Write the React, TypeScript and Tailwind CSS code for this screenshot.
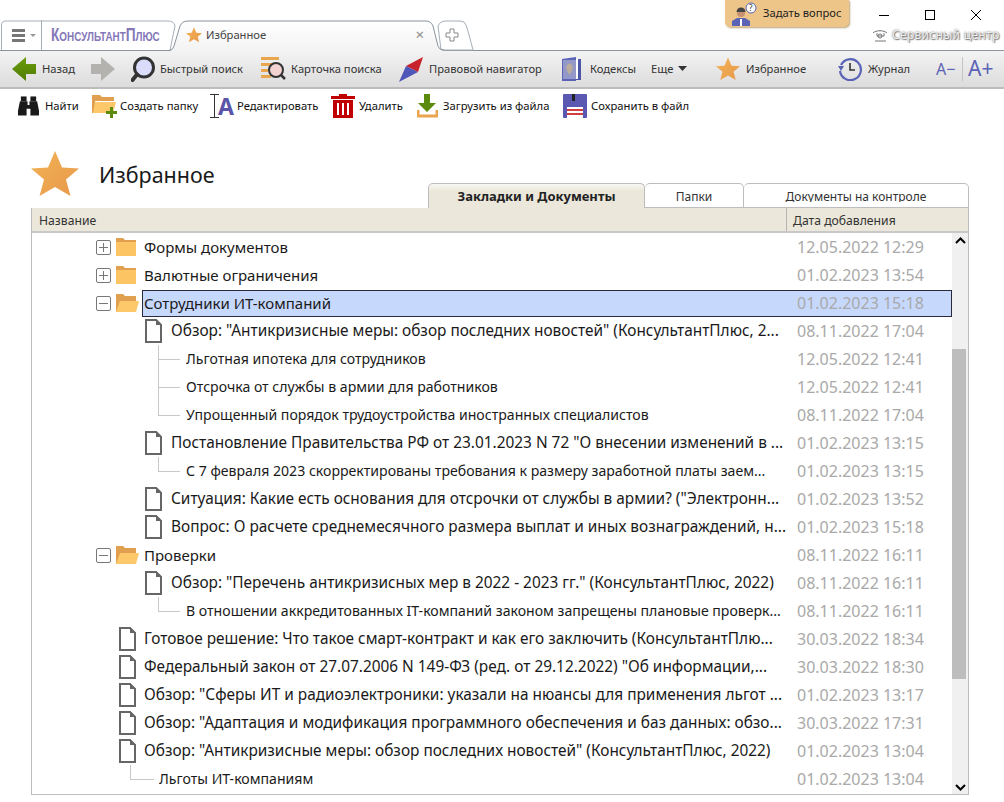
import React from 'react';

type Row = {
  kind: 'folder' | 'open' | 'doc' | 'sub';
  level: 0 | 1;
  text: string;
  date: string;
  last?: boolean;
  selected?: boolean;
};

const rows: Row[] = [
  { kind: 'folder', level: 0, text: 'Формы документов', date: '12.05.2022 12:29' },
  { kind: 'folder', level: 0, text: 'Валютные ограничения', date: '01.02.2023 13:54' },
  { kind: 'open', level: 0, text: 'Сотрудники ИТ-компаний', date: '01.02.2023 15:18', selected: true },
  { kind: 'doc', level: 1, text: 'Обзор: "Антикризисные меры: обзор последних новостей" (КонсультантПлюс, 2...', date: '08.11.2022 17:04' },
  { kind: 'sub', level: 1, text: 'Льготная ипотека для сотрудников', date: '12.05.2022 12:41' },
  { kind: 'sub', level: 1, text: 'Отсрочка от службы в армии для работников', date: '12.05.2022 12:41' },
  { kind: 'sub', level: 1, text: 'Упрощенный порядок трудоустройства иностранных специалистов', date: '08.11.2022 17:04', last: true },
  { kind: 'doc', level: 1, text: 'Постановление Правительства РФ от 23.01.2023 N 72 "О внесении изменений в ...', date: '01.02.2023 13:15' },
  { kind: 'sub', level: 1, text: 'С 7 февраля 2023 скорректированы требования к размеру заработной платы заем...', date: '01.02.2023 13:15', last: true },
  { kind: 'doc', level: 1, text: 'Ситуация: Какие есть основания для отсрочки от службы в армии? ("Электронн...', date: '01.02.2023 13:52' },
  { kind: 'doc', level: 1, text: 'Вопрос: О расчете среднемесячного размера выплат и иных вознаграждений, н...', date: '01.02.2023 15:18' },
  { kind: 'open', level: 0, text: 'Проверки', date: '08.11.2022 16:11' },
  { kind: 'doc', level: 1, text: 'Обзор: "Перечень антикризисных мер в 2022 - 2023 гг." (КонсультантПлюс, 2022)', date: '08.11.2022 16:11' },
  { kind: 'sub', level: 1, text: 'В отношении аккредитованных IT-компаний законом запрещены плановые проверк...', date: '08.11.2022 16:11', last: true },
  { kind: 'doc', level: 0, text: 'Готовое решение: Что такое смарт-контракт и как его заключить (КонсультантПлю...', date: '30.03.2022 18:34' },
  { kind: 'doc', level: 0, text: 'Федеральный закон от 27.07.2006 N 149-ФЗ (ред. от 29.12.2022) "Об информации,...', date: '30.03.2022 18:30' },
  { kind: 'doc', level: 0, text: 'Обзор: "Сферы ИТ и радиоэлектроники: указали на нюансы для применения льгот ...', date: '01.02.2023 13:17' },
  { kind: 'doc', level: 0, text: 'Обзор: "Адаптация и модификация программного обеспечения и баз данных: обзо...', date: '30.03.2022 17:31' },
  { kind: 'doc', level: 0, text: 'Обзор: "Антикризисные меры: обзор последних новостей" (КонсультантПлюс, 2022)', date: '01.02.2023 13:04' },
  { kind: 'sub', level: 0, text: 'Льготы ИТ-компаниям', date: '01.02.2023 13:04', last: true },
];

function Star({ size }: { size: number }) {
  return (
    <svg width={size} height={size} viewBox="0 0 48 48" className="shrink-0">
      <defs>
        <linearGradient id={`star${size}`} x1="0" y1="0" x2="1" y2="1">
          <stop offset="0" stopColor="#f2b355" />
          <stop offset="1" stopColor="#e8984a" />
        </linearGradient>
      </defs>
      <path d="M24 1 31 17.500 48 18.500 35 29.500 39.500 46 24 37 8.500 46 13 29.500 0 18.500 17 17.500Z" fill={`url(#star${size})`} />
    </svg>
  );
}

function FolderIcon({ open }: { open?: boolean }) {
  if (open) {
    return (
      <svg width="23" height="20" viewBox="0 0 23 20">
        <path d="M0 1h7l2 2h11v5H0Z" fill="#e0a050" />
        <path d="M0 6h20v2L1 19H0Z" fill="#e0a050" />
        <path d="M4 8h19l-3 11H0Z" fill="#fdc86a" />
      </svg>
    );
  }
  return (
    <svg width="20" height="20" viewBox="0 0 20 20">
      <path d="M0 1h7l2 2h11v3H0Z" fill="#e0a050" />
      <rect x="0" y="5" width="20" height="14" fill="#fdc463" />
    </svg>
  );
}

function DocIcon() {
  return (
    <svg width="17" height="24" viewBox="0 0 17 24" fill="none">
      <path d="M1 1H11L16 6V23H1Z" stroke="#666" strokeWidth="2" />
      <path d="M11 0 17 6H11Z" fill="#666" />
    </svg>
  );
}

function Toggle({ open }: { open?: boolean }) {
  return (
    <span className="w-[15px] h-[15px] rounded-[2px] border border-[#777] relative flex items-center justify-center shrink-0">
      <span className="w-[9px] h-px bg-[#777]" />
      {!open && <span className="w-px h-[9px] bg-[#777] absolute" />}
    </span>
  );
}

function TreeRow({ row }: { row: Row }) {
  let lead: React.ReactNode;
  if (row.kind === 'folder' || row.kind === 'open') {
    lead = (
      <div className="pl-[64px] w-[110px] shrink-0 flex items-center gap-[5px]">
        <Toggle open={row.kind === 'open'} />
        <FolderIcon open={row.kind === 'open'} />
      </div>
    );
  } else if (row.kind === 'doc') {
    lead = (
      <div className={`flex items-center shrink-0 ${row.level === 1 ? 'pl-[113px] w-[137px]' : 'pl-[87px] w-[110px]'}`}>
        <DocIcon />
      </div>
    );
  } else {
    lead = (
      <div className={`self-stretch shrink-0 ${row.level === 1 ? 'pl-[126px] w-[152px]' : 'pl-[98px] w-[125px]'}`}>
        <div className={`h-[15px] border-l border-b border-[#c8c8c8] ${row.level === 1 ? 'w-[22px]' : 'w-[24px]'}`} />
        {!row.last && <div className="h-[13px] border-l border-[#c8c8c8]" />}
      </div>
    );
  }
  let textCls = 'text-[15.400px]';
  if (row.kind === 'sub') textCls = 'text-[14.100px]';
  if (row.kind === 'folder' || row.kind === 'open') textCls = 'text-[15px]';
  return (
    <div className="h-[28px] flex items-center">
      {lead}
      <div
        className={`flex-1 min-w-0 flex items-center pl-[2px] ${
          row.selected ? 'h-[27px] bg-[#c7d8fd] outline outline-[#2a2a3a] -outline-offset-1' : 'h-full'
        }`}
      >
        <div className={`flex-1 min-w-0 whitespace-nowrap overflow-hidden text-[#1a1a1a] ${textCls}`}>{row.text}</div>
        <div className="w-[164px] pl-[9px] text-[16px] text-[#a9a9a9] whitespace-nowrap">{row.date}</div>
      </div>
    </div>
  );
}

function NavItem({ icon, label, cls }: { icon: React.ReactNode; label?: string; cls?: string }) {
  return (
    <div className={`flex items-center shrink-0 ${cls ?? ''}`}>
      {icon}
      {label && <span className="text-[11.200px] text-[#333] whitespace-nowrap">{label}</span>}
    </div>
  );
}

function ActionItem({ icon, label, cls }: { icon: React.ReactNode; label: string; cls?: string }) {
  return (
    <div className={`flex items-center shrink-0 ${cls ?? ''}`}>
      {icon}
      <span className="text-[11.250px] text-[#111] whitespace-nowrap">{label}</span>
    </div>
  );
}

export default function App() {
  return (
    <div className="w-[1004px] h-[802px] bg-white overflow-hidden relative font-['Noto_Sans','DejaVu_Sans',sans-serif]">
      {/* tab strip */}
      <div className="h-[50px] pt-[20px] relative z-10">
        <div className="absolute left-[725px] top-0 w-[124px] h-[27px] bg-[#eec588] rounded-b-[5px] shadow-[1px_1px_2px_#b9a27c] flex items-center pl-[7px] gap-[5px]">
          <svg width="26" height="26" viewBox="0 0 26 26">
            <circle cx="19" cy="7" r="5" fill="#fff" stroke="#5a63b5" />
            <text x="17" y="10" fontSize="8" fill="#333">?</text>
            <circle cx="9" cy="12" r="4" fill="#c89070" />
            <path d="M4.500 11a4.500 4.500 0 0 1 9 0Z" fill="#444" />
            <path d="M0 25v-5l5-3h8l5 3v5Z" fill="#5a63b5" />
            <rect x="8" y="18" width="2" height="7" fill="#fff" />
          </svg>
          <span className="text-[11.200px] text-[#222] whitespace-nowrap">Задать вопрос</span>
        </div>
        <div className="absolute right-[23px] top-[10px] flex items-center gap-[36px]">
          <span className="w-[10px] h-px bg-black" />
          <span className="w-[10px] h-[10px] border border-black" />
          <svg width="10" height="10" viewBox="0 0 10 10" stroke="#000"><path d="M0 0l10 10M10 0 0 10" /></svg>
        </div>
        <div className="absolute left-[872px] top-[26px] flex items-center gap-[4px] w-[132px]">
          <svg className="shrink-0" width="16" height="14" viewBox="0 0 16 14" fill="none" stroke="#777"><path d="M1 5c3-3 11-3 14 0M3 13h11M5 5v3h7V5" /><circle cx="8" cy="8" r="2" /></svg>
          <span className="text-[12px] tracking-[0.3px] text-[#eeeeee] whitespace-nowrap [text-shadow:0_0_2px_#555,1px_1px_1px_#888]">Сервисный центр</span>
        </div>
        <div className="relative w-[480px] h-[30px]">
          <svg className="absolute inset-0 overflow-visible" width="480" height="31" viewBox="0 0 480 31" fill="none">
            <defs>
              <linearGradient id="tabA" x1="0" y1="0" x2="0" y2="1">
                <stop offset="0" stopColor="#ffffff" />
                <stop offset="1" stopColor="#f3f3f3" />
              </linearGradient>
            </defs>
            <path d="M1.500 30V5Q1.500 1 6 1H168Q174 1 175 6L170 30" fill="#fff" stroke="#a5aeb8" />
            <path d="M441 30H473Q469 14 466 5Q465 1 460 1H446Q440 1 438 6Z" fill="#fff" stroke="#a5aeb8" />
            <path d="M170 31Q173 30 174 26L180 6Q182 1 188 1H426Q431 1 433 6L438 26Q439 30 444 31Z" fill="url(#tabA)" />
            <path d="M170 30Q173 30 174 26L180 6Q182 1 188 1H426Q431 1 433 6L438 26Q439 30 444 30" stroke="#8a939c" />
          </svg>
          <div className="absolute inset-0 flex items-center">
            <div className="flex items-center gap-[5px] w-[41px] pl-[12px] shrink-0">
              <svg width="13" height="13" viewBox="0 0 13 13" fill="#777"><rect y="0" width="13" height="3" /><rect y="5" width="13" height="3" /><rect y="10" width="13" height="3" /></svg>
              <svg width="6" height="3" viewBox="0 0 6 3" fill="#999"><path d="M0 0h6L3 3Z" /></svg>
            </div>
            <span className="w-px h-[30px] bg-[#a5aeb8] shrink-0" />
            <div className="ml-[9px] w-[135px] shrink-0">
              <span className="inline-block origin-left scale-x-[0.76] text-[18px] font-bold font-['Liberation_Sans',sans-serif] text-[#8478b8] whitespace-nowrap [font-variant-caps:small-caps]">КонсультантПлюс</span>
            </div>
            <div className="flex items-center w-[262px] shrink-0">
              <Star size={16} />
              <span className="ml-[4px] text-[11.200px] text-[#444]">Избранное</span>
              <span className="ml-auto mr-[24px] text-[#8a8a8a] text-[15px] leading-none">×</span>
            </div>
            <svg className="-ml-[3px]" width="14" height="14" viewBox="0 0 14 14" fill="none" stroke="#888"><path d="M5 1h4v4h4v4H9v4H5V9H1V5h4Z" /></svg>
          </div>
        </div>
      </div>

      {/* main toolbar */}
      <div className="h-[39px] border-t border-[#8a939c] border-b-2 border-b-[#bcbcbc] bg-gradient-to-b from-[#f3f3f3] to-[#dcdcdc] flex items-center pl-[12px]">
        <NavItem
          cls="w-[79px] gap-[6px]"
          label="Назад"
          icon={
            <svg width="24" height="24" viewBox="0 0 24 24">
              <defs>
                <linearGradient id="backArrow" x1="0" y1="0" x2="0" y2="1">
                  <stop offset="0" stopColor="#6b9c0e" />
                  <stop offset="1" stopColor="#4f7d03" />
                </linearGradient>
              </defs>
              <path d="M0 12 14 0V7H24V17H14V24Z" fill="url(#backArrow)" />
            </svg>
          }
        />
        <NavItem
          cls="w-[40px]"
          icon={
            <svg width="24" height="24" viewBox="0 0 24 24">
              <path d="M24 12 10 0V7H0V17H10V24Z" fill="#b3b2ae" />
            </svg>
          }
        />
        <NavItem
          cls="w-[130px] gap-[4px]"
          label="Быстрый поиск"
          icon={
            <svg width="25" height="26" viewBox="0 0 25 26">
              <circle cx="13" cy="11.500" r="9.500" fill="#d9dcfb" stroke="#333" strokeWidth="3" />
              <path d="M6 18.500 1.500 24" stroke="#333" strokeWidth="4" strokeLinecap="round" />
            </svg>
          }
        />
        <NavItem
          cls="w-[138px] gap-[5px]"
          label="Карточка поиска"
          icon={
            <svg width="25" height="24" viewBox="0 0 25 24">
              <path d="M0 1.500H18M0 7.500H18M0 13.500H7M0 19.500H10" stroke="#eaa64e" strokeWidth="3" />
              <circle cx="15" cy="13" r="7" fill="#f2d3d0" stroke="#333" strokeWidth="2" />
              <path d="M20 18l4 4" stroke="#333" strokeWidth="2.500" />
            </svg>
          }
        />
        <NavItem
          cls="w-[163px] gap-[6px]"
          label="Правовой навигатор"
          icon={
            <svg width="24" height="25" viewBox="0 0 24 25">
              <path d="M24 0 19 15 7 9Z" fill="#c8232c" />
              <path d="M0 25 7 9 19 15Z" fill="#4f58b8" />
            </svg>
          }
        />
        <NavItem
          cls="w-[89px] gap-[9px]"
          label="Кодексы"
          icon={
            <svg width="19" height="24" viewBox="0 0 19 24">
              <path d="M0 2 14 0V24H0Z" fill="#5a63b5" />
              <path d="M14 2H19V23H14Z" fill="#4c55a8" />
              <rect x="14" y="2" width="2" height="20" fill="#fff" />
              <rect x="1" y="3" width="13" height="19" fill="#9398c9" />
              <path d="M7.500 6l3.500 3-1 5-2.500 4L5 14 4 9Z" fill="#b9ac9c" />
            </svg>
          }
        />
        <div className="w-[65px] flex items-center gap-[5px] shrink-0">
          <span className="text-[11.200px] text-[#333]">Еще</span>
          <svg width="9" height="5" viewBox="0 0 9 5" fill="#333"><path d="M0 0h9L4.500 5Z" /></svg>
        </div>
        <NavItem cls="w-[122px] gap-[6px]" label="Избранное" icon={<Star size={24} />} />
        <NavItem
          cls="w-[98px] gap-[6px]"
          label="Журнал"
          icon={
            <svg width="24" height="24" viewBox="0 0 24 24" fill="none">
              <path d="M3 8a10.500 10.500 0 1 1-1 6" stroke="#5a63b5" strokeWidth="2.200" />
              <path d="M0 9h6L3 14Z" fill="#5a63b5" />
              <path d="M12 6v7h5" stroke="#333" strokeWidth="1.600" />
            </svg>
          }
        />
        <span className="text-[16px] text-[#5a63b5] w-[26px] whitespace-nowrap">A−</span>
        <span className="w-px h-[24px] bg-[#c4c4c4] mr-[5px]" />
        <span className="text-[21px] text-[#5a63b5] whitespace-nowrap">A+</span>
      </div>

      {/* action toolbar */}
      <div className="h-[34px] flex items-center pl-[18px]">
        <ActionItem
          cls="w-[74px] gap-[6px]"
          label="Найти"
          icon={
            <svg width="21" height="20" viewBox="0 0 22 20" fill="#1a1a1a">
              <rect x="3" y="0" width="6" height="5" />
              <rect x="13" y="0" width="6" height="5" />
              <path d="M2 5h8v4h2V5h8l2 10v5h-9v-7h-4v7H0v-5Z" />
            </svg>
          }
        />
        <ActionItem
          cls="w-[118px] gap-[1px]"
          label="Создать папку"
          icon={
            <svg width="27" height="24" viewBox="0 0 27 24">
              <path d="M0 1h8l2 2h12v4H0Z" fill="#e0a050" />
              <path d="M0 5h3v14H0Z" fill="#e0a050" />
              <path d="M3 8h21l-3 11H1Z" fill="#fdc86a" />
              <path d="M18 13h3v4h4v3h-4v4h-3v-4h-4v-3h4Z" fill="#5c8a0c" />
            </svg>
          }
        />
        <ActionItem
          cls="w-[121px] gap-[3px]"
          label="Редактировать"
          icon={
            <div className="flex items-center">
              <svg width="9" height="24" viewBox="0 0 9 24" fill="none" stroke="#333"><path d="M0 .500h9M4.500 .500v23M0 23.500h9" /></svg>
              <span className="text-[23px] font-bold text-[#5a55a8] leading-none -ml-[1px] w-[16px]">A</span>
            </div>
          }
        />
        <ActionItem
          cls="w-[86px] gap-[4px]"
          label="Удалить"
          icon={
            <svg width="24" height="24" viewBox="0 0 24 24" fill="#c00000">
              <path d="M8 0h8v2h8v3H0V2h8Z" />
              <path d="M2 6h20v18H2Zm4 3v12h2V9Zm5 0v12h2V9Zm5 0v12h2V9Z" fillRule="evenodd" />
            </svg>
          }
        />
        <ActionItem
          cls="w-[146px] gap-[5px]"
          label="Загрузить из файла"
          icon={
            <svg width="21" height="24" viewBox="0 0 21 24">
              <path d="M7 0h6v9h6l-9 9-9-9h6Z" fill="#5c8a0c" />
              <path d="M1 16v6h19v-6" fill="none" stroke="#eaa64e" strokeWidth="3" />
            </svg>
          }
        />
        <ActionItem
          cls="gap-[4px]"
          label="Сохранить в файл"
          icon={
            <svg width="24" height="24" viewBox="0 0 24 24">
              <rect width="24" height="24" rx="1" fill="#5a58b0" />
              <rect x="9" y="0" width="3" height="7" fill="#222" />
              <rect x="4" y="13" width="16" height="11" fill="#fff" />
              <path d="M4 16h16M4 20h16" stroke="#c00000" strokeWidth="1.500" />
            </svg>
          }
        />
      </div>

      {/* heading and tabs */}
      <div className="h-[85px] flex items-end ml-[31px] w-[938px]">
        <div className="flex items-center self-start mt-[27px]">
          <Star size={48} />
          <h1 className="ml-[20px] mt-[3px] text-[21.500px] text-[#1a1a1a] font-normal">Избранное</h1>
        </div>
        <div className="ml-auto w-[541px] h-[25px] flex text-[12px]">
          <div className="w-[217px] rounded-t-[5px] border border-b-0 border-[#bdbdbd] bg-gradient-to-b from-[#f8f7f3] from-0% to-[#ebe7da] to-30% pt-[3px] text-center text-[13px] font-bold text-[#222]">
            Закладки и Документы
          </div>
          <div className="w-[99px] rounded-t-[5px] border border-l-0 border-[#bdbdbd] pt-[4px] text-center text-[#333]">
            <div className="h-[14px] overflow-hidden leading-[18px]">Папки</div>
          </div>
          <div className="flex-1 rounded-t-[5px] border border-l-0 border-[#bdbdbd] pt-[4px] text-center text-[#333]">
            <div className="h-[14px] overflow-hidden leading-[18px]">Документы на контроле</div>
          </div>
        </div>
      </div>

      {/* list */}
      <div className="ml-[31px] w-[938px] h-[587px] border border-[#bdbdbd] border-t-0 flex flex-col">
        <div className="h-[25px] pt-[4px] bg-[#ebe7da] border-b-2 border-[#c9c9c9] flex text-[12.200px] text-[#333] shrink-0">
          <div className="flex-1 pl-[7px] flex items-center">Название</div>
          <div className="w-[182px] -mt-[4px] border-l border-[#b5b5b5] pt-[4px] pl-[6px] flex items-center">Дата добавления</div>
        </div>
        <div className="flex-1 flex min-h-0">
          <div className="flex-1 min-w-0">
            {rows.map((r, i) => (
              <TreeRow key={i} row={r} />
            ))}
          </div>
          <div className="w-[16px] bg-[#f0f0f0] flex flex-col items-center">
            <svg className="mt-[4px]" width="11" height="7" viewBox="0 0 11 7" fill="none" stroke="#000" strokeWidth="2"><path d="M1 6 5.500 1.500 10 6" /></svg>
            <div className="mt-[105px] w-[14px] h-[330px] bg-[#bdbdbd] self-start" />
            <svg className="mt-auto mb-[3px]" width="11" height="7" viewBox="0 0 11 7" fill="none" stroke="#000" strokeWidth="2"><path d="M1 1 5.500 5.500 10 1" /></svg>
          </div>
        </div>
      </div>
    </div>
  );
}
